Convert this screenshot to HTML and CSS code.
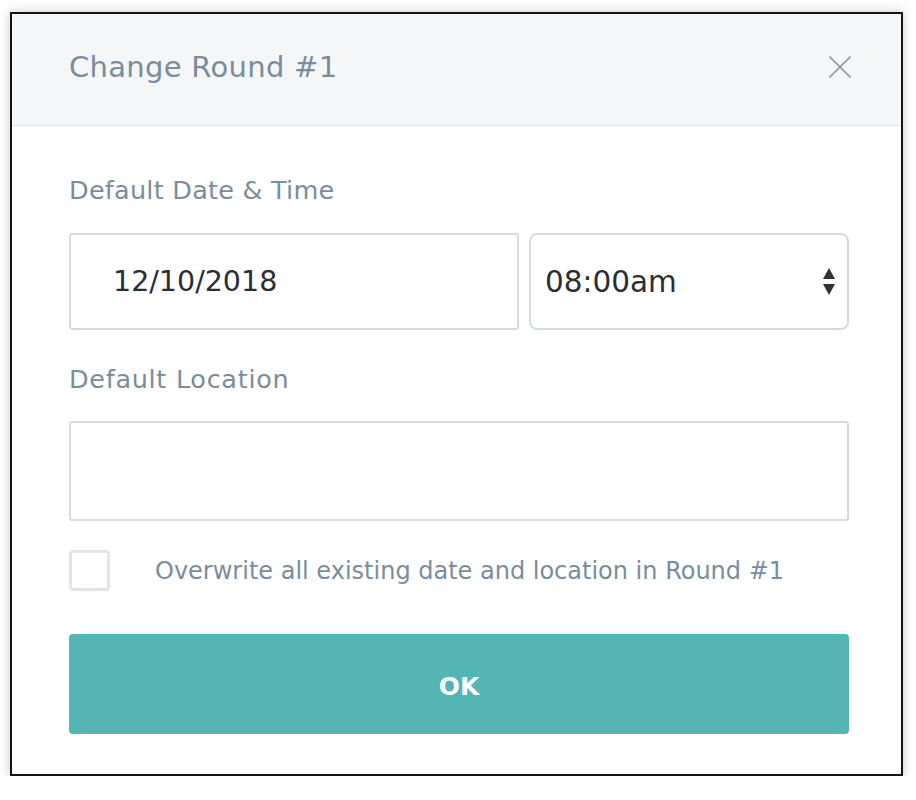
FILE: index.html
```html
<!DOCTYPE html>
<html lang="en">
<head>
<meta charset="utf-8">
<title>Change Round #1</title>
<link rel="stylesheet" href="styles.css">
</head>
<body>
<div class="dialog">
  <div class="dialog-header">
    <h1 class="dialog-title">Change Round #1</h1>
    <svg class="close-icon" width="22" height="22" viewBox="0 0 22 22" aria-label="Close">
      <line x1="0.5" y1="0.5" x2="21.5" y2="21.5" />
      <line x1="21.5" y1="0.5" x2="0.5" y2="21.5" />
    </svg>
  </div>
  <div class="dialog-body">
    <div class="field-label label-date">Default Date &amp; Time</div>
    <div class="date-row">
      <div class="text-box date-box">12/10/2018</div>
      <div class="select-box">
        <span>08:00am</span>
        <svg class="select-arrows" width="12" height="27" viewBox="0 0 12 27">
          <polygon points="6,0 12,11 0,11" />
          <polygon points="0,16 12,16 6,27" />
        </svg>
      </div>
    </div>
    <div class="field-label label-location">Default Location</div>
    <div class="location-box"></div>
    <div class="check-row">
      <div class="checkbox"></div>
      <div class="check-text">Overwrite all existing date and location in Round #1</div>
    </div>
    <div class="ok-button">OK</div>
  </div>
</div>
</body>
</html>
```
FILE: styles.css
```css
html, body {
  margin: 0;
  padding: 0;
  background: #ffffff;
}

body {
  font-family: "DejaVu Sans", "Liberation Sans", sans-serif;
}

.dialog {
  width: 889px;
  margin: 12px 0 0 10px;
  border: 2px solid #141414;
  background: #ffffff;
  box-shadow: 0 0 10px rgba(0, 0, 0, 0.22);
}

.dialog-header {
  box-sizing: border-box;
  height: 112px;
  background: #f5f6f8;
  border-bottom: 1px solid #e2e5e8;
  display: flex;
  align-items: center;
  justify-content: space-between;
  padding: 0 50px 5px 57px;
}

.dialog-title {
  margin: 0;
  font-size: 29px;
  font-weight: normal;
  letter-spacing: 0.3px;
  color: #7a8d9b;
  line-height: 36px;
}

.close-icon line {
  stroke: #8a9aa7;
  stroke-width: 1.6;
}

.dialog-body {
  padding: 48px 52px 40px 57px;
}

.field-label {
  font-size: 25.5px;
  line-height: 32px;
  letter-spacing: 0.25px;
  color: #7a8d9b;
}

.date-row {
  display: flex;
  gap: 10px;
  margin-top: 27px;
}

.text-box {
  box-sizing: border-box;
  height: 97px;
  border: 2px solid #d5dbde;
  border-radius: 3px;
  display: flex;
  align-items: center;
  font-size: 28.5px;
  color: #2a2e33;
}

.date-box {
  width: 450px;
  padding-left: 42px;
}

.select-box {
  box-sizing: border-box;
  width: 320px;
  height: 97px;
  border: 2px solid #d5dbde;
  border-radius: 8px;
  display: flex;
  align-items: center;
  justify-content: space-between;
  padding: 0 12px 0 14px;
  font-size: 29.5px;
  color: #2a2e33;
}

.select-arrows polygon {
  fill: #2f3338;
}

.label-location {
  margin-top: 33px;
  letter-spacing: 0.7px;
}

.location-box {
  box-sizing: border-box;
  height: 100px;
  margin-top: 26px;
  border: 2px solid #d5dbde;
  border-radius: 3px;
}

.check-row {
  display: flex;
  align-items: center;
  gap: 45px;
  margin-top: 29px;
}

.checkbox {
  box-sizing: border-box;
  width: 41px;
  height: 41px;
  border: 3px solid #e2e6e9;
  border-radius: 4px;
  flex: none;
}

.check-text {
  font-size: 24px;
  color: #7a8d9b;
  line-height: 30px;
}

.ok-button {
  box-sizing: border-box;
  margin-top: 43px;
  height: 100px;
  padding-top: 4px;
  background: #55b5b5;
  border-radius: 4px;
  display: flex;
  align-items: center;
  justify-content: center;
  color: #ffffff;
  font-weight: bold;
  font-size: 25px;
}
```
